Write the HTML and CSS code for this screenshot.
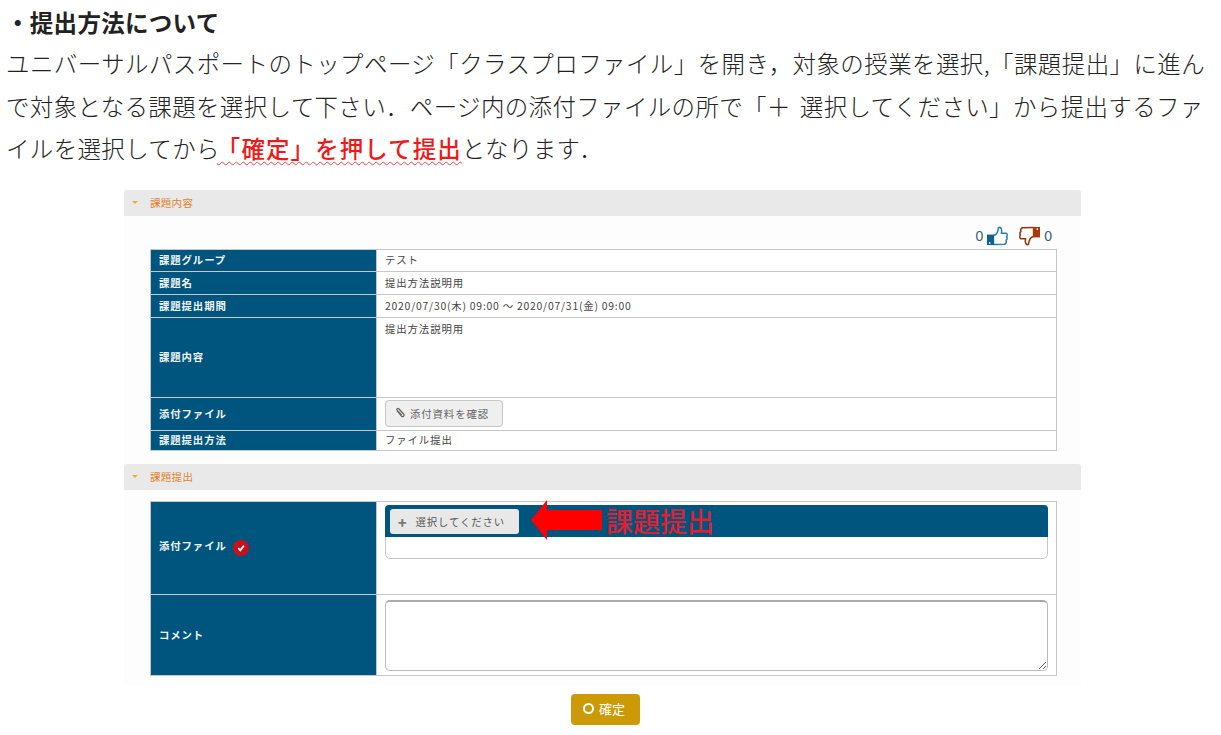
FILE: index.html
```html
<!DOCTYPE html>
<html lang="ja">
<head>
<meta charset="utf-8">
<title>提出方法について</title>
<link rel="stylesheet" href="styles.css">
</head>
<body>
<div class="doc">
  <h1 class="title">・提出方法について</h1>
  <p class="line line-first">ユニバーサルパスポートのトップページ「クラスプロファイル」を開き，対象の授業を選択,「課題提出」に進ん</p>
  <p class="line">で対象となる課題を選択して下さい．ページ内の添付ファイルの所で「＋<span class="gap"></span>選択してください」から提出するファ</p>
  <p class="line">イルを選択してから<span class="hot">「確定」を押して提出</span>となります．</p>
</div>

<div class="panel">
  <div class="sec-head"><span class="caret"></span>課題内容</div>
  <div class="likes">
    <span>0</span>
    <svg class="thumb" viewBox="0 0 22 20"><path d="M7 9.5 C9.5 9 11.5 6 12 1.2 C14.8 0.2 16 3 15 7.2 L20 7.2 C21.5 7.8 21.5 10 20.5 11 C21.5 12 21 14 20 14.5 C20.5 16 20 18 18.5 18.7 L7 19" fill="#fff" stroke="#2f7ea8" stroke-width="1.6" stroke-linejoin="round"/><rect x="0" y="8.5" width="7.5" height="11" fill="#0f5f8f"/><rect x="2" y="16.5" width="1.6" height="1.6" fill="#fff"/></svg>
    <svg class="thumb thumb-down" viewBox="0 0 22 20"><path d="M15 10.5 C12.5 11 10.5 14 10 18.8 C7.2 19.8 6 17 7 12.8 L2 12.8 C0.5 12.2 0.5 10 1.5 9 C0.5 8 1 6 2 5.5 C1.5 4 2 2 3.5 1.3 L15 1" fill="#fff" stroke="#8f3510" stroke-width="1.6" stroke-linejoin="round"/><rect x="14.5" y="0.5" width="7.5" height="11" fill="#a83a0c"/><rect x="18.4" y="2" width="1.6" height="1.6" fill="#fff"/></svg>
    <span>0</span>
  </div>
  <table class="grid">
    <tr class="r22"><th>課題グループ</th><td>テスト</td></tr>
    <tr class="r23"><th>課題名</th><td>提出方法説明用</td></tr>
    <tr class="r23"><th>課題提出期間</th><td class="date">2020/07/30(木) 09:00 ～ 2020/07/31(金) 09:00</td></tr>
    <tr class="r80"><th>課題内容</th><td class="top">提出方法説明用</td></tr>
    <tr class="r33"><th>添付ファイル</th><td><span class="btn-gray"><svg class="clip" viewBox="0 0 12 12"><path d="M3 3.5 L7.5 9 C8.8 10.5 11 8.8 9.8 7.2 L4.8 1.8 C3.8 0.8 2.2 2 3 3.2 L7.6 8" fill="none" stroke="#666" stroke-width="1.3"/></svg>添付資料を確認</span></td></tr>
    <tr class="r20"><th>課題提出方法</th><td>ファイル提出</td></tr>
  </table>

  <div class="sec-head sec-two"><span class="caret"></span>課題提出</div>
  <table class="grid grid-two">
    <tr class="r93">
      <th>添付ファイル<span class="req"><svg viewBox="0 0 10 10"><path d="M2.2 5.2 L4.3 7.4 L7.9 2.6" fill="none" stroke="#fff" stroke-width="1.8"/></svg></span></th>
      <td class="top">
        <div class="filebox">
          <div class="filebar">
            <span class="btn-pick"><span class="plus">+</span>選択してください</span>
            <svg class="arrow" viewBox="0 0 71 40"><path d="M0 20 L16 0 L16 10 L71 10 L71 30 L16 30 L16 40 Z" fill="#fe0000"/></svg>
            <span class="note">課題提出</span>
          </div>
        </div>
      </td>
    </tr>
    <tr class="r81"><th>コメント</th><td class="comment"><textarea class="area"></textarea></td></tr>
  </table>
</div>

<div class="actions"><span class="btn-ok"><span class="ring"></span><span class="ok-label">確定</span></span></div>
</body>
</html>
```
FILE: styles.css
```css
* { box-sizing: border-box; }
html, body { margin: 0; padding: 0; background: #fff; }
body { width: 1221px; height: 735px; overflow: hidden; font-family: "Noto Sans CJK JP", "Liberation Sans", sans-serif; }

.doc { padding: 3px 0 0 6px; height: 190px; color: #222; }
.title { margin: 0; height: 39px; line-height: 39px; font-size: 23.5px; letter-spacing: .3px; font-weight: 700; white-space: nowrap; }
.line { margin: 0; height: 42.5px; line-height: 42.5px; font-size: 23.47px; letter-spacing: .37px; font-weight: 300; white-space: nowrap; }
.line-first { letter-spacing: .43px; }
.gap { display: inline-block; width: 9px; }
.hot { margin-left: -3px; color: #f01818; font-weight: 500; letter-spacing: 1.1px; text-decoration: underline wavy #e8484a 1px; text-underline-offset: 3px; }

.panel { width: 957px; height: 495px; margin-left: 124px; background: #fdfdfd; }
.sec-head { height: 26px; padding: 0 0 2px 8px; display: flex; align-items: center; background: #e9e9e9; border-radius: 3px 3px 0 0; color: #e5822e; font-size: 10.5px; letter-spacing: .3px; }
.caret { width: 0; height: 0; margin-right: 12px; border: 3px solid transparent; border-top: 3px solid #f3ad25; border-bottom: 0; }
.sec-two { margin-top: 13px; }

.likes { height: 33px; padding: 10px 29px 0 0; display: flex; justify-content: flex-end; align-items: flex-start; color: #37607c; font-size: 14px; line-height: 20px; font-family: "Liberation Sans", sans-serif; }
.thumb { width: 21px; height: 20px; margin-left: 4px; }
.thumb-down { margin: 0 4px 0 11px; }

.grid { width: 907px; margin-left: 26px; border-collapse: collapse; table-layout: fixed; font-size: 10.4px; letter-spacing: .9px; }
.grid th, .grid td { border: 1px solid #c4c8cb; padding: 0 8px 2px; vertical-align: middle; }
.grid th { width: 226px; background: #00557f; color: #f1f5f8; font-weight: 700; text-align: left; white-space: nowrap; }
.grid td { background: #fff; color: #444; }
.grid td.top { vertical-align: top; padding-top: 3px; }
.grid td.date { letter-spacing: .77px; }
.grid-two { margin-top: 11px; }
.r20 { height: 20px; } .r22 { height: 22px; } .r23 { height: 23px; } .r33 { height: 33px; } .r80 { height: 80px; } .r81 { height: 81px; } .r93 { height: 93px; }

.btn-gray { display: inline-flex; align-items: center; width: 118px; height: 27px; padding-left: 8px; background: #efefef; border: 1px solid #c6c6c6; border-radius: 4px; color: #666; vertical-align: middle; }
.clip { width: 12px; height: 12px; margin-right: 4px; }

.req { display: inline-flex; align-items: center; justify-content: center; width: 16px; height: 16px; margin-left: 6px; border-radius: 50%; background: #c90f1b; vertical-align: middle; }
.req svg { width: 10px; height: 10px; }

.filebox { width: 663px; height: 54px; background: #fff; border: 1px solid #c6c6c6; border-radius: 5px; }
.filebar { position: relative; height: 32px; padding: 4px 0 0 5px; background: #00557f; border-radius: 4px 4px 0 0; margin: -1px -1px 0; }
.btn-pick { display: flex; align-items: center; width: 129px; height: 25px; padding-left: 8px; background: #e8e8e8; border-radius: 3px; color: #555; }
.plus { margin-right: 8px; font-size: 14px; font-weight: 900; color: #777; line-height: 1; }
.arrow { position: absolute; left: 146px; top: -5px; width: 71px; height: 40px; }
.note { position: absolute; left: 221px; top: 0; color: #e02030; font-size: 27px; font-weight: 500; line-height: 32px; letter-spacing: 0; white-space: nowrap; }

.grid .comment { padding: 4px 8px; }
.area { display: block; width: 663px; height: 71px; margin: 0; border: 1px solid #bbb; border-top: 2px solid #aaa; border-radius: 5px; background: #fff; }

.actions { height: 50px; padding: 9px 0 0 571px; }
.btn-ok { display: flex; align-items: center; width: 69px; height: 31px; padding-left: 12px; background: #cc9a06; border-radius: 4px; color: #fff; font-size: 13px; }
.ring { width: 11px; height: 11px; margin: 0 5px 2px 0; border: 2px solid #fff; border-radius: 50%; }
.ok-label { margin-top: -3px; }
```
